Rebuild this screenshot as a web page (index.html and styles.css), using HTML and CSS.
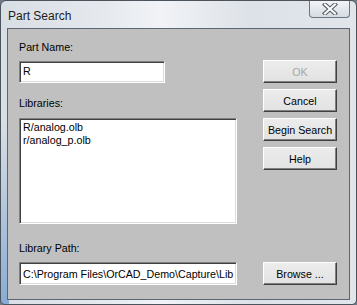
FILE: index.html
```html
<!DOCTYPE html>
<html lang="en">
<head>
    <meta charset="UTF-8">
    <title>Part Search</title>
    <link rel="stylesheet" href="styles.css">
</head>
<body>
    <div class="window">
        <div class="titlebar">
            <span class="title">Part Search</span>
            <div class="close-btn">
                <svg width="16" height="12" viewBox="0 0 16 12">
                    <path d="M3 1.5 L13 10.5 M13 1.5 L3 10.5" stroke="#5a626c" stroke-width="4.2" stroke-linecap="square" fill="none"/>
                    <path d="M3 1.5 L13 10.5 M13 1.5 L3 10.5" stroke="#ffffff" stroke-width="2" stroke-linecap="square" fill="none"/>
                </svg>
            </div>
        </div>
        <div class="client">
            <div class="left-col">
                <label class="field-label" for="partName">Part Name:</label>
                <input class="field part-name" id="partName" type="text" value="R">
                <label class="field-label libs-label">Libraries:</label>
                <div class="listbox">
                    <div class="item">R/analog.olb</div>
                    <div class="item">r/analog_p.olb</div>
                </div>
                <label class="field-label path-label" for="libPath">Library Path:</label>
                <input class="field lib-path" id="libPath" type="text" value="C:\Program Files\OrCAD_Demo\Capture\Lib">
            </div>
            <div class="right-col">
                <button class="btn" disabled>OK</button>
                <button class="btn">Cancel</button>
                <button class="btn">Begin Search</button>
                <button class="btn">Help</button>
                <button class="btn browse">Browse ...</button>
            </div>
        </div>
    </div>
</body>
</html>
```

FILE: styles.css
```css
html, body {
    margin: 0;
    padding: 0;
    width: 357px;
    height: 305px;
    overflow: hidden;
    background: #6f7a86;
}
.window {
    box-sizing: border-box;
    width: 357px;
    height: 305px;
    border: 1px solid #4b535c;
    border-radius: 6px 6px 5px 5px;
    background:
        linear-gradient(to bottom, rgba(255,255,255,0) 40%, rgba(70,130,200,0.55) 100%) left / 8px 100% no-repeat,
        linear-gradient(to right, #d9dee4 0%, #e6eaef 30%, #f1f3f6 45%, #dde2e8 70%, #e2e6eb 100%);
    display: flex;
    flex-direction: column;
    font-family: "Liberation Sans", Arial, sans-serif;
}
.titlebar {
    height: 27px;
    display: flex;
    align-items: flex-start;
    justify-content: space-between;
}
.title {
    font-size: 12px;
    color: #1c1c1c;
    padding: 8px 0 0 7px;
}
.close-btn {
    width: 41px;
    height: 17px;
    margin-right: 6px;
    box-sizing: border-box;
    border: 1px solid #6c7682;
    border-top: none;
    border-radius: 0 0 4px 4px;
    background: linear-gradient(to bottom, #f2f4f7, #d5dbe2);
    display: flex;
    align-items: center;
    justify-content: center;
}
.client {
    margin: 0 6px 4px 6px;
    flex: 1;
    border: 1px solid #5d6670;
    background-color: #c0c0c0;
    display: flex;
    padding: 12px 12px 14px 11px;
    gap: 26px;
    font-size: 10.7px;
    color: #000;
}
.left-col {
    width: 218px;
    display: flex;
    flex-direction: column;
}
.field-label {
    line-height: 13px;
    display: block;
}
.field {
    box-sizing: border-box;
    font-family: inherit;
    font-size: 10.7px;
    color: #000;
    background: #fff;
    border-style: solid;
    border-width: 1px;
    border-color: #808080 #fff #fff #808080;
    box-shadow: inset 1px 1px 0 #404040, inset -1px -1px 0 #dcdcdc;
    outline: none;
    margin: 0;
}
.part-name {
    width: 146px;
    height: 22px;
    margin-top: 7px;
    padding: 0 2px 3px 3px;
}
.libs-label {
    margin-top: 14px;
}
.listbox {
    box-sizing: border-box;
    height: 106px;
    margin-top: 8px;
    background: #fff;
    border-style: solid;
    border-width: 1px;
    border-color: #808080 #fff #fff #808080;
    box-shadow: inset 1px 1px 0 #404040, inset -1px -1px 0 #dcdcdc;
    padding: 2px 3px;
}
.listbox .item {
    line-height: 13px;
}
.path-label {
    margin-top: auto;
}
.lib-path {
    width: 218px;
    height: 23px;
    margin-top: 7px;
    padding: 0 2px 0 3px;
}
.right-col {
    width: 74px;
    display: flex;
    flex-direction: column;
    gap: 6px;
    padding-top: 19px;
}
.btn {
    box-sizing: border-box;
    width: 74px;
    height: 23px;
    font-family: inherit;
    font-size: 10.7px;
    color: #000;
    background: linear-gradient(to bottom, #ececec, #e2e2e2);
    border: 1px solid;
    border-color: #ffffff #404040 #404040 #ffffff;
    box-shadow: inset -1px -1px 0 #808080;
    padding: 0;
    margin: 0;
}
.btn:disabled {
    color: #a6a6a6;
}
.browse {
    margin-top: auto;
}
```
